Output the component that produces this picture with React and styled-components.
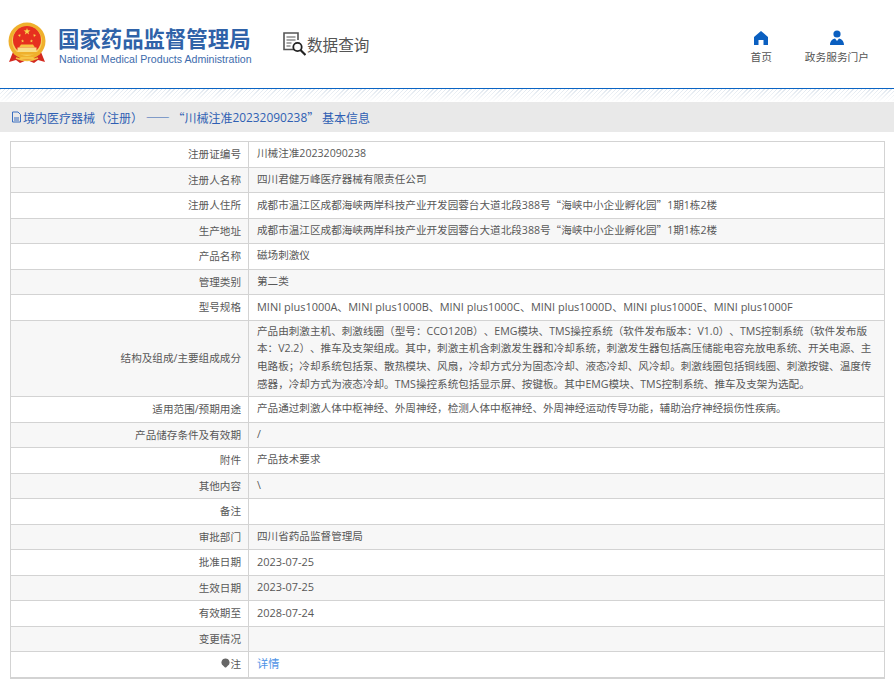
import React from "react"
import styled, { createGlobalStyle } from "styled-components"

const GlobalStyle = createGlobalStyle`
html, body {
  margin: 0;
  padding: 0;
  background: #fff;
  font-family: "Open Sans", "Noto Sans CJK SC", sans-serif;
  text-spacing-trim: space-all;
}
`

const Header = styled.header`
display: flex;
align-items: flex-start;
height: 88px;
border-bottom: 1px solid #0a64c4;
`

const LogoBlock = styled.div`
display: flex;
margin-left: 8px;
margin-top: 22px;
`

const LogoText = styled.div`
margin-left: 12px;
margin-top: 4px;
width: 196px;
`

const LogoTitle = styled.div`
font-family: "Noto Sans CJK SC", sans-serif;
font-weight: 700;
font-size: 21.4px;
line-height: 24px;
color: #2f62a8;
white-space: nowrap;
`

const LogoSub = styled.div`
font-family: "Liberation Sans", sans-serif;
font-size: 10.6px;
line-height: 12px;
margin-top: 3px;
margin-left: 1px;
color: #3d6bac;
white-space: nowrap;
`

const QueryTitle = styled.div`
display: flex;
align-items: center;
margin-left: 29px;
margin-top: 30px;
font-family: "Noto Sans CJK SC", sans-serif;
font-size: 15.6px;
line-height: 28px;
color: #555;
white-space: nowrap;
`

const Nav = styled.nav`
display: flex;
margin-left: auto;
margin-right: 25px;
margin-top: 30px;
gap: 33px;
`

const NavItem = styled.a`
display: flex;
flex-direction: column;
align-items: center;
font-family: "Noto Sans CJK SC", sans-serif;
font-size: 10.7px;
line-height: 14px;
color: #555;
`

const NavIcon = styled.svg`
width: 16px;
height: 16px;
margin-bottom: 4px;
`

const Hatch = styled.div`
height: 13px;
background:
  linear-gradient(to bottom, rgba(255,255,255,0), #fff),
  repeating-linear-gradient(135deg, #dfe6ee 0 1px, #fff 1px 3px);
`

const TitleBar = styled.div`
display: flex;
align-items: center;
height: 30px;
padding-left: 11px;
background: #e9e9e9;
font-family: "Noto Sans CJK SC", sans-serif;
font-size: 12px;
color: #2f5fb3;
white-space: pre;
`

const TitleSerial = styled.span`
font-family: "Open Sans", sans-serif;
font-size: 11.9px;
`

const Content = styled.main`
padding: 9px 9px 0 10px;
`

const Table = styled.table`
width: 100%;
border-collapse: collapse;
table-layout: fixed;
border: 1px solid #d3d3d3;
border-bottom-width: 2px;
font-size: 10.6px;
color: #585858;
`

const Row = styled.tr`
background: ${p => (p.$shade ? "#f7f7f7" : "#fff")};
`

const Label = styled.td`
width: 230px;
height: 24.5px;
padding: 0 7px 0 0;
border: 1px solid #d3d3d3;
text-align: right;
line-height: 16px;
white-space: nowrap;
`

const Value = styled.td`
padding: 2px 11px 2px 8px;
border: 1px solid #d3d3d3;
line-height: 17.9px;
`

const Latin = styled.span`
font-size: 10.95px;
`

const CjkMark = styled.span`
font-family: "Noto Sans CJK SC", sans-serif;
`

const Link = styled.a`
font-size: 11.2px;
color: #4d93e6;
`

const address = (
  <>成都市温江区成都海峡两岸科技产业开发园蓉台大道北段388号<CjkMark>“</CjkMark>海峡中小企业孵化园<CjkMark>”</CjkMark>1期1栋2楼</>
)

const rows = [
  ["注册证编号", "川械注准20232090238"],
  ["注册人名称", "四川君健万峰医疗器械有限责任公司"],
  ["注册人住所", address],
  ["生产地址", address],
  ["产品名称", "磁场刺激仪"],
  ["管理类别", "第二类"],
  ["型号规格", <Latin>MINI plus1000A、MINI plus1000B、MINI plus1000C、MINI plus1000D、MINI plus1000E、MINI plus1000F</Latin>],
  ["结构及组成/主要组成成分", "产品由刺激主机、刺激线圈（型号：CCO120B）、EMG模块、TMS操控系统（软件发布版本：V1.0）、TMS控制系统（软件发布版本：V2.2）、推车及支架组成。其中，刺激主机含刺激发生器和冷却系统，刺激发生器包括高压储能电容充放电系统、开关电源、主电路板；冷却系统包括泵、散热模块、风扇，冷却方式分为固态冷却、液态冷却、风冷却。刺激线圈包括铜线圈、刺激按键、温度传感器，冷却方式为液态冷却。TMS操控系统包括显示屏、按键板。其中EMG模块、TMS控制系统、推车及支架为选配。"],
  ["适用范围/预期用途", "产品通过刺激人体中枢神经、外周神经，检测人体中枢神经、外周神经运动传导功能，辅助治疗神经损伤性疾病。"],
  ["产品储存条件及有效期", "/"],
  ["附件", "产品技术要求"],
  ["其他内容", "\\"],
  ["备注", ""],
  ["审批部门", "四川省药品监督管理局"],
  ["批准日期", <Latin>2023-07-25</Latin>],
  ["生效日期", <Latin>2023-07-25</Latin>],
  ["有效期至", <Latin>2028-07-24</Latin>],
  ["变更情况", ""],
]

function Star({ x, y, r, rotate = 0 }) {
  const points = []
  for (let i = 0; i < 10; i++) {
    const radius = i % 2 === 0 ? r : r * 0.4
    const angle = (Math.PI / 5) * i - Math.PI / 2
    points.push(`${(radius * Math.cos(angle)).toFixed(2)},${(radius * Math.sin(angle)).toFixed(2)}`)
  }
  return <polygon fill="#f9d44c" transform={`translate(${x} ${y}) rotate(${rotate})`} points={points.join(" ")} />
}

function Emblem() {
  return (
    <svg width="38" height="42" viewBox="0 0 38 42">
      <path d="M5 30 L1 40 L8 38 L12 41 L19 38 L26 41 L30 38 L37 40 L33 30 Z" fill="#d42a20" />
      <path d="M8 36 Q19 41 30 36" fill="none" stroke="#f2c040" strokeWidth="1.6" />
      <circle cx="19" cy="19" r="18.5" fill="#efb02c" />
      <circle cx="19" cy="19" r="15" fill="#f6cf5e" />
      <circle cx="19" cy="18" r="14" fill="#e6301f" />
      <Star x={19} y={9.5} r={3.6} />
      <Star x={11.5} y={13.5} r={1.7} rotate={-25} />
      <Star x={14.5} y={19} r={1.7} rotate={-10} />
      <Star x={23.5} y={19} r={1.7} rotate={10} />
      <Star x={26.5} y={13.5} r={1.7} rotate={25} />
      <path d="M13 22.5 L25 22.5 L27 25.5 L11 25.5 Z" fill="#f6c445" />
      <rect x="9.5" y="25.5" width="19" height="4.5" fill="#f8df8a" />
      <rect x="6.5" y="30" width="25" height="2.6" fill="#efb02c" />
      <path d="M13 35 L25 35 L27 37.5 L11 37.5 Z" fill="#f6c445" />
    </svg>
  )
}

function QueryIcon() {
  return (
    <svg width="23" height="25" viewBox="0 0 23 25" style={{ marginRight: 1 }}>
      <path d="M13 17.5 H1 V1 H15 V8" fill="none" stroke="#555" strokeWidth="1.6" />
      <path d="M3.5 5 H12.5 M3.5 8 H12.5 M3.5 11 H8.5 M3.5 14 H7.5" stroke="#555" strokeWidth="1.2" />
      <circle cx="14.5" cy="15" r="4.2" fill="#fff" stroke="#222" strokeWidth="1.8" />
      <path d="M17.5 18 L22.5 23" stroke="#222" strokeWidth="2.2" />
    </svg>
  )
}

function DocIcon() {
  return (
    <svg width="11" height="12" viewBox="0 0 11 12" style={{ marginRight: 1 }}>
      <path d="M1.5 11 V1 H7 L9.5 3.5 V11 Z M3 7 H8 M3 9 H8" fill="none" stroke="#3a6fc0" strokeWidth="1" />
    </svg>
  )
}

export default function App() {
  return (
    <>
      <GlobalStyle />
      <Header>
        <LogoBlock>
          <Emblem />
          <LogoText>
            <LogoTitle>国家药品监督管理局</LogoTitle>
            <LogoSub>National Medical Products Administration</LogoSub>
          </LogoText>
        </LogoBlock>
        <QueryTitle>
          <QueryIcon />
          数据查询
        </QueryTitle>
        <Nav>
          <NavItem>
            <NavIcon viewBox="0 0 16 16">
              <path d="M8 1 L15 7 V15 H10.5 V10 H5.5 V15 H1 V7 Z" fill="#0a5fc0" />
            </NavIcon>
            首页
          </NavItem>
          <NavItem>
            <NavIcon viewBox="0 0 16 16">
              <circle cx="8" cy="4" r="3.6" fill="#0a5fc0" />
              <path d="M1 15 C1 10.5 4 9 6 8.5 L8 11 L10 8.5 C12 9 15 10.5 15 15 Z" fill="#0a5fc0" />
            </NavIcon>
            政务服务门户
          </NavItem>
        </Nav>
      </Header>
      <Hatch />
      <TitleBar lang="zh-CN">
        <DocIcon />
        境内医疗器械（注册） —— “川械注准<TitleSerial>20232090238</TitleSerial>” 基本信息
      </TitleBar>
      <Content>
        <Table>
          <tbody>
            {rows.map(([label, value], i) => (
              <Row key={label} $shade={i % 2 === 1}>
                <Label>{label}</Label>
                <Value>{value}</Value>
              </Row>
            ))}
            <Row>
              <Label>
                <svg width="9" height="10" viewBox="0 0 9 10">
                  <path d="M4.5 0.5 A4 4 0 0 1 6.5 8 L5 9.5 H4 L2.5 8 A4 4 0 0 1 4.5 0.5 Z" fill="#666" />
                </svg>
                注
              </Label>
              <Value><Link>详情</Link></Value>
            </Row>
          </tbody>
        </Table>
      </Content>
    </>
  )
}
